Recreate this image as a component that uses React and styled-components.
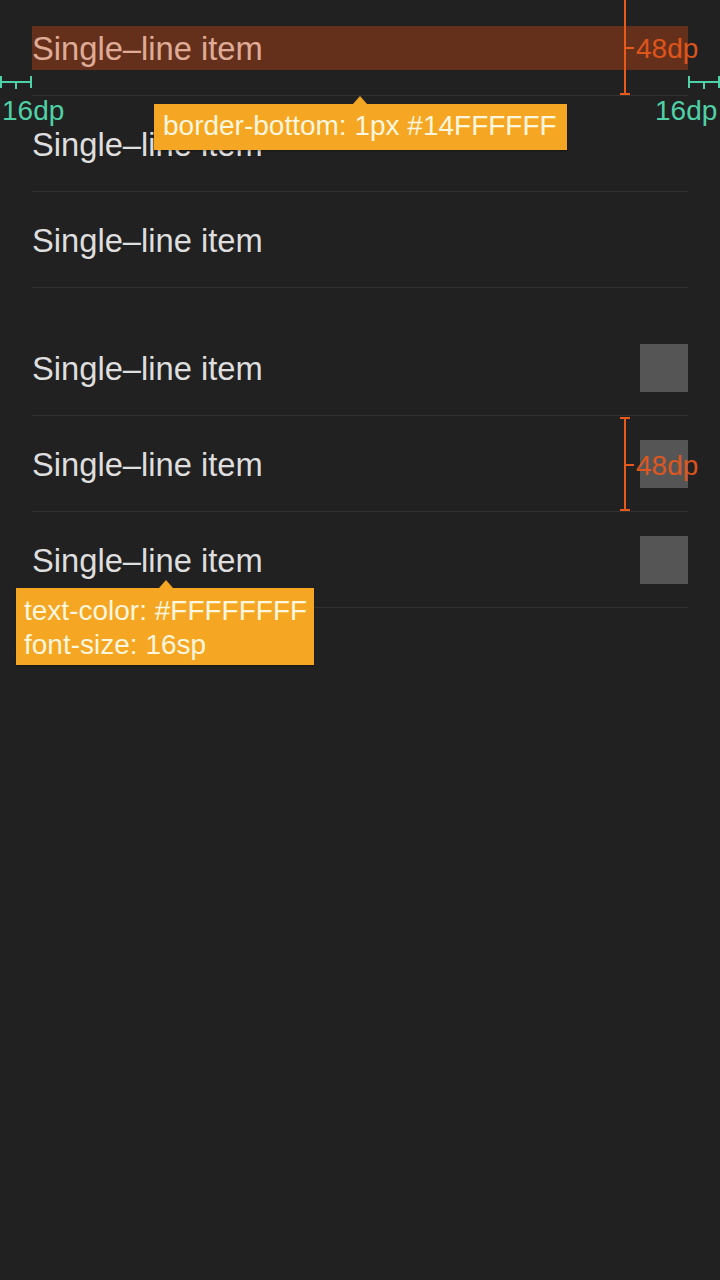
import React from "react";
import styled, { createGlobalStyle } from "styled-components";

const GlobalStyle = createGlobalStyle`
  html, body {
    margin: 0;
    padding: 0;
    background: #212121;
  }
  * {
    box-sizing: border-box;
  }
`;

const Page = styled.div`
  position: relative;
  min-height: 1280px;
  background: #212121;
  font-family: "Liberation Sans", Arial, sans-serif;
  overflow: hidden;
`;

const List = styled.div`
  display: flex;
  flex-direction: column;
  padding: 0 32px;
  margin-top: ${(p) => p.$top || 0}px;
`;

const Row = styled.div`
  position: relative;
  display: flex;
  align-items: center;
  justify-content: space-between;
  height: 96px;
  border-bottom: 1px solid rgba(255, 255, 255, 0.08);
`;

const Label = styled.div`
  position: relative;
  flex: ${(p) => (p.$highlight ? 1 : "none")};
  height: 44px;
  line-height: 46px;
  font-size: 32.7px;
  color: #dedede;
  &::after {
    content: "";
    display: ${(p) => (p.$highlight ? "block" : "none")};
    position: absolute;
    inset: 0;
    background: rgba(230, 76, 16, 0.35);
  }
`;

const Thumb = styled.div`
  width: 48px;
  height: 48px;
  background: #555555;
`;

/* redline annotations */

const HeightMark = styled.div`
  position: absolute;
  left: 592px;
  top: ${(p) => p.$top}px;
  bottom: 0;
  width: 2px;
  background: #e8591c;
  &::before,
  &::after {
    content: "";
    position: absolute;
    left: -4px;
    width: 10px;
    height: 2px;
    background: #e8591c;
  }
  &::before {
    top: 0;
  }
  &::after {
    bottom: 0;
  }
`;

const HeightTick = styled.span`
  position: absolute;
  left: 2px;
  top: 50%;
  width: 8px;
  height: 2px;
  background: #e8591c;
`;

const HeightText = styled.span`
  position: absolute;
  left: 12px;
  top: 50%;
  transform: translateY(-44%);
  font-size: 28px;
  color: #e8591c;
  opacity: 0.92;
  white-space: nowrap;
`;

const WidthMark = styled.div`
  position: absolute;
  top: 76px;
  left: ${(p) => p.$left}px;
  width: 32px;
  height: 12px;
  border-left: 2px solid #4fd0a6;
  border-right: 2px solid #4fd0a6;
  &::before {
    content: "";
    position: absolute;
    left: 0;
    right: 0;
    top: 5px;
    height: 2px;
    background: #4fd0a6;
  }
  &::after {
    content: "";
    position: absolute;
    left: 13px;
    top: 5px;
    width: 2px;
    height: 8px;
    background: #4fd0a6;
  }
`;

const WidthText = styled.span`
  position: absolute;
  top: 95px;
  left: ${(p) => p.$left}px;
  font-size: 28px;
  line-height: 32px;
  color: #4fd0a6;
`;

const Tip = styled.div`
  position: absolute;
  left: ${(p) => p.$left}px;
  top: ${(p) => p.$top}px;
  padding: ${(p) => p.$pad || "5px 10px 7px 9px"};
  background: #f5a623;
  color: #fff6de;
  font-size: 28px;
  line-height: ${(p) => p.$lh || 34}px;
  white-space: nowrap;
  box-shadow: 0 1px 2px rgba(0, 0, 0, 0.35);
  &::before {
    content: "";
    position: absolute;
    top: -8px;
    left: ${(p) => p.$arrow}px;
    border-left: 7px solid transparent;
    border-right: 7px solid transparent;
    border-bottom: 8px solid #f5a623;
  }
`;

const Measure = ({ top = 0 }) => (
  <HeightMark $top={top}>
    <HeightTick />
    <HeightText>48dp</HeightText>
  </HeightMark>
);

const App = () => {
  return (
    <>
      <GlobalStyle />
      <Page>
        <List>
          <Row>
            <Label $highlight>Single–line item</Label>
            <Measure top={-2} />
          </Row>
          <Row>
            <Label>Single–line item</Label>
          </Row>
          <Row>
            <Label>Single–line item</Label>
          </Row>
        </List>

        <List $top={32}>
          <Row>
            <Label>Single–line item</Label>
            <Thumb />
          </Row>
          <Row>
            <Label>Single–line item</Label>
            <Thumb />
            <Measure top={1} />
          </Row>
          <Row>
            <Label>Single–line item</Label>
            <Thumb />
          </Row>
        </List>

        <WidthMark $left={0} />
        <WidthText $left={2}>16dp</WidthText>
        <WidthMark $left={688} />
        <WidthText $left={655}>16dp</WidthText>

        <Tip $left={154} $top={104} $arrow={199}>
          border-bottom: 1px #14FFFFFF
        </Tip>
        <Tip $left={16} $top={588} $arrow={143} $pad="6px 7px 3px 8px">
          text-color: #FFFFFFFF
          <br />
          font-size: 16sp
        </Tip>
      </Page>
    </>
  );
};

export default App;
